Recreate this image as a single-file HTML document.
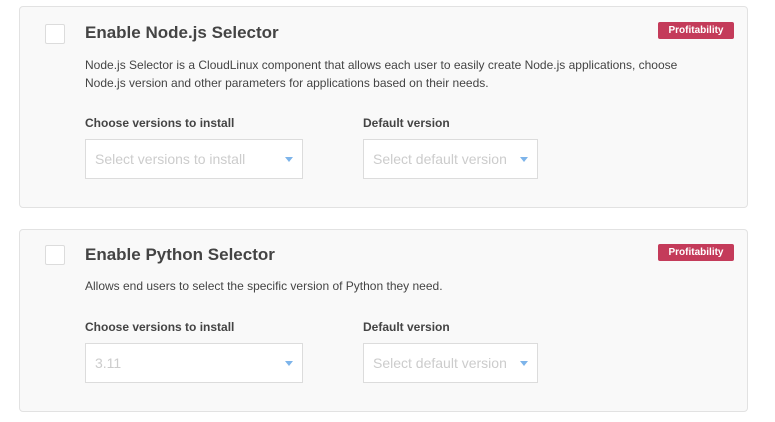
<!DOCTYPE html>
<html><head><style>
body{margin:0;width:775px;height:422px;background:#fff;font-family:"Liberation Sans",sans-serif;position:relative;overflow:hidden}
.card{position:absolute;left:19px;width:729px;background:#f9f9f9;border:1px solid #e2e2e2;border-radius:4px;box-sizing:border-box}
.cb{position:absolute;left:25px;width:18px;height:18px;background:#fff;border:1px solid #dcdcdc;border-radius:2px}
.t{position:absolute;left:65px;font-size:17px;font-weight:bold;color:#444;white-space:nowrap}
.badge{position:absolute;left:638px;width:76px;height:17px;background:#c43b5a;color:#fff;font-size:10px;font-weight:bold;text-align:center;line-height:17px;border-radius:2px}
.d{position:absolute;left:65px;font-size:12px;color:#444;line-height:18px;width:620px}
.l{position:absolute;font-size:12px;font-weight:bold;color:#444}
.s{position:absolute;height:40px;background:#fff;border:1px solid #dcdcdc;box-sizing:border-box;font-size:14px;color:#ccc;line-height:38px;padding-left:9px;white-space:nowrap}
.s:after{content:"";position:absolute;right:9px;top:17px;border-left:4px solid transparent;border-right:4px solid transparent;border-top:5px solid #7db4ea}
</style></head><body>
<div class="card" style="top:6px;height:202px">
 <div class="cb" style="top:17px"></div>
 <div class="t" style="top:16px">Enable Node.js Selector</div>
 <div class="badge" style="top:15px">Profitability</div>
 <div class="d" style="top:49px">Node.js Selector is a CloudLinux component that allows each user to easily create Node.js applications, choose<br>Node.js version and other parameters for applications based on their needs.</div>
 <div class="l" style="left:65px;top:109px">Choose versions to install</div>
 <div class="l" style="left:343px;top:109px">Default version</div>
 <div class="s" style="left:65px;top:132px;width:218px">Select versions to install</div>
 <div class="s" style="left:343px;top:132px;width:175px">Select default version</div>
</div>
<div class="card" style="top:229px;height:183px">
 <div class="cb" style="top:15px"></div>
 <div class="t" style="top:15px">Enable Python Selector</div>
 <div class="badge" style="top:14px">Profitability</div>
 <div class="d" style="top:47px">Allows end users to select the specific version of Python they need.</div>
 <div class="l" style="left:65px;top:90px">Choose versions to install</div>
 <div class="l" style="left:343px;top:90px">Default version</div>
 <div class="s" style="left:65px;top:113px;width:218px">3.11</div>
 <div class="s" style="left:343px;top:113px;width:175px">Select default version</div>
</div>
</body></html>
